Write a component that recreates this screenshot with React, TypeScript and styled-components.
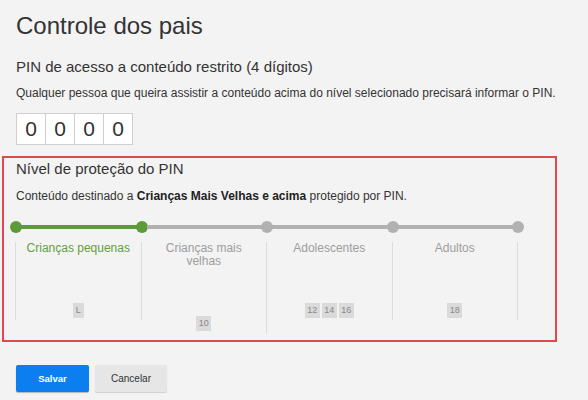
import { Fragment } from "react";
import styled, { createGlobalStyle } from "styled-components";

const GlobalStyle = createGlobalStyle`
  html, body {
    margin: 0;
    padding: 0;
    background: #f3f3f3;
  }
  body {
    font-family: "Liberation Sans", Arial, sans-serif;
    color: #333;
  }
`;

const Page = styled.div`
  width: 588px;
  height: 400px;
  overflow: hidden;
  background: #f3f3f3;
`;

const Title = styled.h1`
  margin: 12px 0 0 16px;
  font-size: 24px;
  line-height: 28px;
  font-weight: normal;
  color: #333;
`;

const Heading = styled.h2`
  margin: 18px 0 0 16px;
  font-size: 15px;
  line-height: 18px;
  font-weight: normal;
  color: #333;
`;

const Description = styled.p`
  margin: 10px 0 0 16px;
  font-size: 12px;
  line-height: 14px;
  color: #333;
  white-space: nowrap;
`;

const PinRow = styled.div`
  display: flex;
  margin: 13px 0 0 16px;
`;

const PinBox = styled.div`
  width: 28px;
  height: 30px;
  background: #fff;
  border: 1px solid #cfcfcf;
  margin-left: -1px;
  display: flex;
  align-items: center;
  justify-content: center;
  font-size: 21px;
  color: #333;
  &:first-child {
    margin-left: 0;
  }
`;

const Highlight = styled.section`
  margin: 11px 0 0 2px;
  width: 539px;
  border: 2px solid #e2474f;
  padding: 2px 0 7px 12px;
`;

const SubHeading = styled.h3`
  margin: 0;
  font-size: 15px;
  line-height: 18px;
  font-weight: normal;
  color: #333;
`;

const Summary = styled.p`
  margin: 11px 0 0;
  font-size: 12px;
  line-height: 14px;
  color: #333;
  b {
    font-weight: bold;
    color: #222;
  }
`;

const Track = styled.div`
  display: flex;
  align-items: center;
  width: 514px;
  height: 12px;
  margin: 18px 0 0 -6px;
`;

const Dot = styled.span<{ $on: boolean }>`
  flex: none;
  width: 12px;
  height: 12px;
  border-radius: 50%;
  background: ${(p) => (p.$on ? "#5c9b37" : "#b1b1b1")};
`;

const Segment = styled.span<{ $on: boolean }>`
  flex: 1;
  height: 4px;
  margin: 0 -1px;
  background: ${(p) => (p.$on ? "#5c9b37" : "#b1b1b1")};
`;

const Columns = styled.div`
  display: grid;
  grid-template-columns: repeat(4, 125.5px);
  align-items: start;
  margin-top: 9px;
`;

const Column = styled.div<{ $first?: boolean }>`
  display: flex;
  flex-direction: column;
  align-items: center;
  padding: 0 0 2px;
  border-right: 1px solid #dcdcdc;
  border-left: ${(p) => (p.$first ? "1px solid #dcdcdc" : "none")};
  margin-left: ${(p) => (p.$first ? "-1px" : "0")};
`;

const Label = styled.div<{ $active: boolean }>`
  max-width: 105px;
  font-size: 12px;
  line-height: 13px;
  text-align: center;
  color: ${(p) => (p.$active ? "#62a044" : "#9d9d9d")};
`;

const Badges = styled.div`
  display: flex;
  gap: 2px;
  margin-top: 48px;
`;

const Badge = styled.span`
  min-width: 6px;
  height: 15px;
  line-height: 15px;
  padding: 0 2.5px;
  text-align: center;
  background: #dadada;
  color: #888;
  font-size: 9px;
`;

const Actions = styled.div`
  display: flex;
  gap: 6px;
  margin: 23px 0 0 16px;
`;

const Button = styled.button<{ $primary?: boolean }>`
  width: ${(p) => (p.$primary ? "73px" : "72px")};
  height: 27px;
  border: none;
  border-radius: 2px;
  font-family: "Liberation Sans", Arial, sans-serif;
  font-size: ${(p) => (p.$primary ? "9.5px" : "10px")};
  font-weight: ${(p) => (p.$primary ? "bold" : "normal")};
  color: ${(p) => (p.$primary ? "#fff" : "#333")};
  background: ${(p) => (p.$primary ? "#0b7ff0" : "#e6e6e6")};
  box-shadow: ${(p) =>
    p.$primary ? "0 1px 1px rgba(0,0,0,0.25)" : "0 1px 1px rgba(0,0,0,0.15)"};
  cursor: pointer;
`;

const levels = [
  { label: "Crianças pequenas", badges: ["L"] },
  { label: "Crianças mais velhas", badges: ["10"] },
  { label: "Adolescentes", badges: ["12", "14", "16"] },
  { label: "Adultos", badges: ["18"] },
];

const selected = 1;

const App = () => {
  return (
    <Page>
      <GlobalStyle />
      <Title>Controle dos pais</Title>
      <Heading>PIN de acesso a conteúdo restrito (4 dígitos)</Heading>
      <Description>
        Qualquer pessoa que queira assistir a conteúdo acima do nível selecionado precisará
        informar o PIN.
      </Description>
      <PinRow>
        {["0", "0", "0", "0"].map((d, i) => (
          <PinBox key={i}>{d}</PinBox>
        ))}
      </PinRow>

      <Highlight>
        <SubHeading>Nível de proteção do PIN</SubHeading>
        <Summary>
          Conteúdo destinado a <b>Crianças Mais Velhas e acima</b> protegido por PIN.
        </Summary>
        <Track>
          {[0, 1, 2, 3, 4].map((i) => (
            <Fragment key={i}>
              <Dot $on={i <= selected} />
              {i < 4 && <Segment $on={i < selected} />}
            </Fragment>
          ))}
        </Track>
        <Columns>
          {levels.map((lvl, i) => (
            <Column key={lvl.label} $first={i === 0}>
              <Label $active={i === 0}>{lvl.label}</Label>
              <Badges>
                {lvl.badges.map((b) => (
                  <Badge key={b}>{b}</Badge>
                ))}
              </Badges>
            </Column>
          ))}
        </Columns>
      </Highlight>

      <Actions>
        <Button $primary>Salvar</Button>
        <Button>Cancelar</Button>
      </Actions>
    </Page>
  );
};

export default App;
